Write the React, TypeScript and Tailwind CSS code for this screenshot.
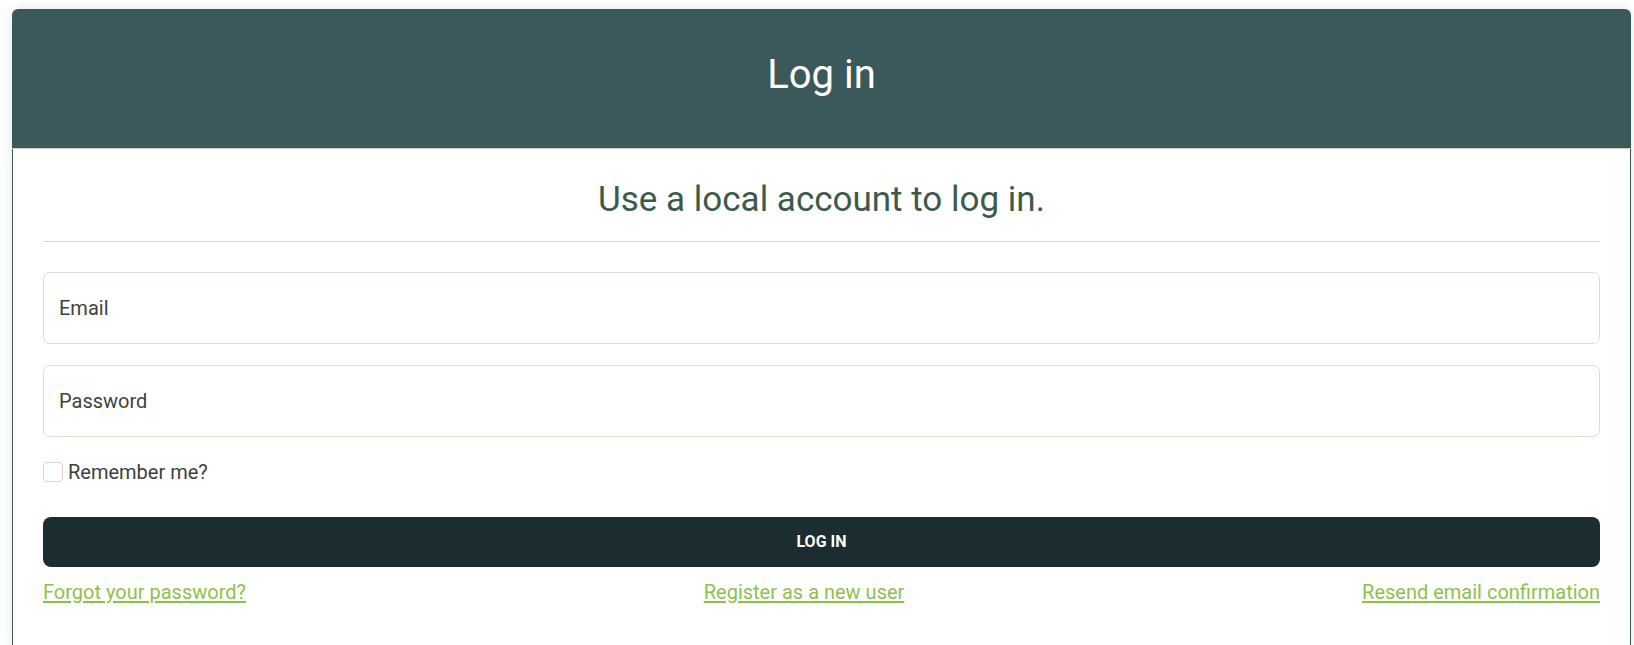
import React from "react";

export default function App() {
  return (
    <div
      className="min-h-[645px] w-full bg-white pt-[9px] pl-[12px] pr-[3px] overflow-hidden"
      style={{ fontFamily: "Roboto, 'Liberation Sans', sans-serif" }}
    >
      <div className="rounded-t-[6px] shadow-[0_0_12px_rgba(0,0,0,0.10)]">
        <div className="h-[140px] rounded-t-[6px] bg-[#3b595b] border-b border-[#cfcdc2] pt-[42px] text-center">
          <h1 className="text-[40px] leading-[48px] font-normal text-white">Log in</h1>
        </div>
        <div className="border-x border-[#3b5a4c] px-[30px] pt-[30px] pb-[40px] bg-white">
          <h3 className="text-center text-[35px] leading-[42px] font-normal text-[#3c5a4b]">
            Use a local account to log in.
          </h3>
          <div className="mt-[20px] h-px bg-[#d8d5cc]" />
          <div className="mt-[30px] flex flex-col gap-[21px]">
            <div className="h-[72px] rounded-[7px] border border-[#e2dccf] flex items-center px-[15px]">
              <span className="text-[20px] text-[#3f3f3f]">Email</span>
            </div>
            <div className="h-[72px] rounded-[7px] border border-[#e2dccf] flex items-center px-[15px]">
              <span className="text-[20px] text-[#3f3f3f]">Password</span>
            </div>
          </div>
          <div className="mt-[25px] flex items-center h-[20px]">
            <div className="w-[20px] h-[20px] rounded-[4px] border border-[#ddd5c8] bg-white" />
            <span className="ml-[5px] text-[20px] text-[#3f3f3f] leading-[20px]">Remember me?</span>
          </div>
          <button className="mt-[35px] w-full h-[50px] rounded-[8px] bg-[#1b2d30] text-white text-[16px] font-bold uppercase tracking-normal">
            Log in
          </button>
          <div className="mt-[10px] flex justify-between text-[20px] leading-[30px] text-[#8bc34a]">
            <a className="underline underline-offset-[2px]" href="#">Forgot your password?</a>
            <a className="underline underline-offset-[2px]" href="#">Register as a new user</a>
            <a className="underline underline-offset-[2px]" href="#">Resend email confirmation</a>
          </div>
        </div>
      </div>
    </div>
  );
}
